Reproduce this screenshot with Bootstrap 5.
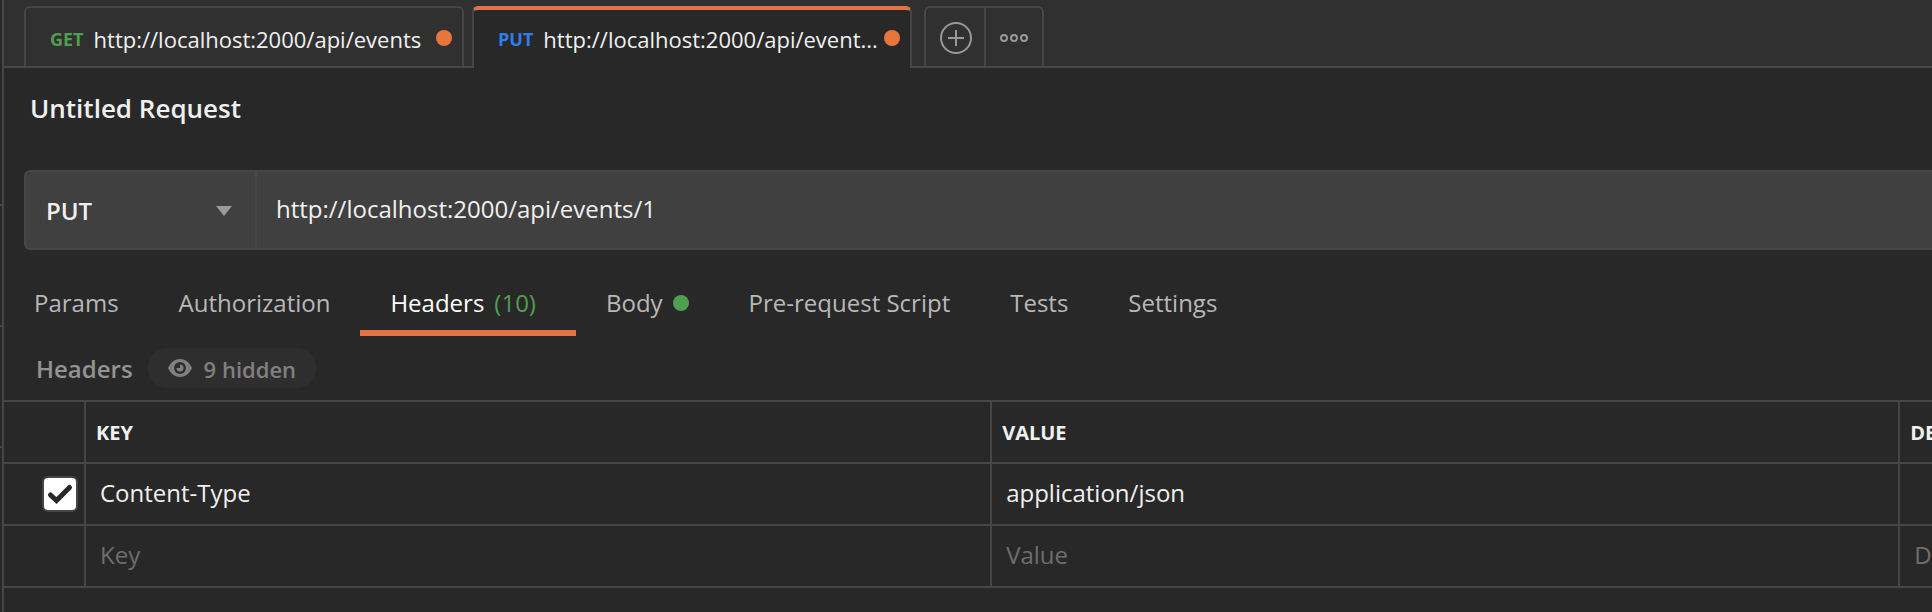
<!DOCTYPE html>
<html lang="en" data-bs-theme="dark">
<head>
<meta charset="utf-8">
<meta name="viewport" content="width=device-width, initial-scale=1">
<title>Untitled Request</title>
<link href="https://cdn.jsdelivr.net/npm/bootstrap@5.3.0/dist/css/bootstrap.min.css" rel="stylesheet">
<style>
:root { --edge: #464646; --pane: #282828; --bar: #303030; --field: #404040; --accent: #e8763a; --line: #e27347; --green: #4f9e52; --ink: #f0f0f0; }
body { font-family: "Open Sans", sans-serif; font-size: 24px; line-height: 32px; background: var(--pane); color: var(--ink); overflow: hidden; }
.side-rail { width: 4px; border-right: 2px solid var(--edge); }
.side-rail i { display: block; height: 121px; border-bottom: 2px solid var(--edge); }
.side-rail i:first-child { height: 206px; }
.tab-strip { height: 68px; padding: 6px 0 0 20px; background: linear-gradient(var(--edge), var(--edge)) bottom / 100% 2px no-repeat var(--bar); }
.req-tab { width: 440px; border: 2px solid var(--edge); border-bottom: 0; border-radius: 6px 6px 0 0; color: var(--ink); font-size: 22px; padding: 2px 10px 0 24px; text-decoration: none; margin-right: 8px; height: 60px; }
.req-tab:hover { color: var(--ink); }
.req-tab.active { height: 62px; background: var(--pane); border-top: 4px solid var(--line); margin-right: 12px; padding: 0 10px 2px 24px; }
.verb { font-size: 18px; font-weight: 700; margin-right: 10px; }
.verb-get { color: var(--green); }
.verb-put { color: #2f7de9; }
.req-tab span:not(.dot) { padding-top: 2px; }
.dot { width: 16px; height: 16px; border-radius: 50%; background: var(--accent); flex: none; }
.dot-green { background: var(--green); margin-left: 10px; }
.strip-tools { height: 60px; border: 2px solid var(--edge); border-bottom: 0; border-radius: 6px 6px 0 0; }
.strip-tools button { display: flex; align-items: center; justify-content: center; width: 56px; padding: 2px 0 0; border: 0; background: none; }
.strip-tools button:first-child { width: 60px; padding-left: 2px; border-right: 2px solid var(--edge); }
.req-title { font-size: 26px; line-height: 36px; font-weight: 600; margin: 0; padding: 22px 26px 44px; color: var(--ink); }
.url-bar { height: 80px; margin-left: 20px; background: var(--field); border: 2px solid var(--edge); border-right: 0; border-radius: 6px 0 0 6px; }
.method-select { width: 231px; border: 0; border-right: 2px solid var(--edge); appearance: none; background: transparent; color: var(--ink); font-weight: 600; padding: 2px 20px 0; }
.caret { position: absolute; right: 25px; top: 34px; pointer-events: none; }
.url-input { border: 0; background: transparent; color: var(--ink); padding: 0 19px 2px; }
.section-tabs { padding-top: 34px; }
.section-tabs a { display: flex; align-items: center; padding: 2px 30px 10px; height: 52px; border-bottom: 6px solid transparent; color: #b8b8b8; text-decoration: none; }
.section-tabs a.active { color: #fff; border-color: var(--line); }
.count { color: var(--green); margin: 0 10px; }
.sub-head { padding: 12px 32px; font-weight: 600; color: #939393; gap: 15px; }
.sub-head h2 { font-size: 24px; line-height: 32px; font-weight: 600; margin: 0; padding-top: 2px; color: #939393; }
.hidden-pill { height: 40px; border: 0; border-radius: 20px; background: #2e2e2e; color: #808080; font-size: 22px; font-weight: 600; padding: 0 20px; }
.hidden-pill span { padding-top: 2px; }
.kv-grid { table-layout: fixed; width: 100%; border-collapse: separate; border-spacing: 0; border-top: 2px solid var(--edge); }
.kv-grid th, .kv-grid td { height: 62px; padding: 0 0 2px 14px; border-bottom: 2px solid var(--edge); border-right: 2px solid var(--edge); overflow: hidden; white-space: nowrap; }
.kv-grid th { font-size: 20px; font-weight: 700; padding: 2px 0 0 10px; }
.kv-grid tr > :last-child { border-right: 0; }
.kv-grid input[type=text] { display: block; width: 100%; border: 0; padding: 0; background: none; color: var(--ink); }
.kv-grid ::placeholder { color: #6e6e6e; opacity: 1; }
.pick { width: 82px; }
.key-col { width: 47%; }
.value-col { width: 47.1%; }
.kv-grid .form-check-input { display: block; width: 36px; height: 36px; margin: 0 6px 0 auto; border: 2px solid var(--edge); border-radius: 6px; background: #fff url("data:image/svg+xml,%3Csvg xmlns='http://www.w3.org/2000/svg' viewBox='0 0 32 32'%3E%3Cpath d='M6.500 17l6 5.500L25.500 9.500' fill='none' stroke='%23282828' stroke-width='5' stroke-linecap='round' stroke-linejoin='miter'/%3E%3C/svg%3E") center / 32px 32px no-repeat; }
.kv-grid td.pick-cell { padding: 0; }
</style>
</head>
<body>
<div class="d-flex min-vh-100">
  <div class="side-rail flex-shrink-0" aria-hidden="true"><i></i><i></i><i></i></div>
  <main class="flex-grow-1 overflow-hidden">
    <nav class="tab-strip d-flex align-items-start" aria-label="Open requests">
      <a href="#" class="req-tab d-flex align-items-center"><span class="verb verb-get">GET</span><span class="text-truncate">http://localhost:2000/api/events</span><span class="dot ms-auto"></span></a>
      <a href="#" class="req-tab active d-flex align-items-center" aria-current="page"><span class="verb verb-put">PUT</span><span class="text-nowrap">http://localhost:2000/api/event...</span><span class="dot ms-auto"></span></a>
      <div class="strip-tools d-flex">
        <button type="button" aria-label="New tab"><svg width="34" height="34" viewBox="0 0 34 34" fill="none" stroke="#999" stroke-width="2"><circle cx="17" cy="17" r="15"/><path d="M17 9v16M9 17h16"/></svg></button>
        <button type="button" aria-label="Tab options"><svg width="30" height="12" viewBox="0 0 30 12" fill="none" stroke="#999" stroke-width="2"><circle cx="5" cy="6" r="3"/><circle cx="15" cy="6" r="3"/><circle cx="25" cy="6" r="3"/></svg></button>
      </div>
    </nav>
    <h1 class="req-title">Untitled Request</h1>
    <div class="url-bar d-flex">
      <div class="position-relative d-flex">
        <select class="method-select" aria-label="Method"><option>PUT</option><option>GET</option></select>
        <svg class="caret" width="16" height="10" viewBox="0 0 16 10"><path d="M0 0h16L8 10z" fill="#999"/></svg>
      </div>
      <input class="url-input flex-grow-1" type="text" aria-label="Request URL" value="http://localhost:2000/api/events/1">
    </div>
    <nav class="section-tabs d-flex" aria-label="Request sections">
      <a href="#">Params</a>
      <a href="#">Authorization</a>
      <a href="#" class="active">Headers<span class="count">(10)</span></a>
      <a href="#">Body<span class="dot dot-green"></span></a>
      <a href="#">Pre-request Script</a>
      <a href="#">Tests</a>
      <a href="#">Settings</a>
    </nav>
    <div class="sub-head d-flex align-items-center">
      <h2>Headers</h2>
      <button type="button" class="hidden-pill d-flex align-items-center"><svg class="me-2" width="24" height="18" viewBox="0 0 24 18"><path d="M0 9C3 3 7 0 12 0s9 3 12 9c-3 6-7 9-12 9S3 15 0 9z" fill="#808080"/><circle cx="12" cy="9" r="6" fill="#2e2e2e"/><path d="M12 9V5.500A3.500 3.500 0 1 1 8.500 9z" fill="#808080"/></svg><span class="ps-1">9 hidden</span></button>
    </div>
    <table class="kv-grid">
      <colgroup><col class="pick"><col class="key-col"><col class="value-col"><col></colgroup>
      <thead><tr><th></th><th scope="col">KEY</th><th scope="col">VALUE</th><th scope="col">DESCRIPTION</th></tr></thead>
      <tbody>
        <tr><td class="pick-cell"><input class="form-check-input" type="checkbox" checked aria-label="Include Content-Type"></td><td>Content-Type</td><td>application/json</td><td></td></tr>
        <tr><td></td><td><input type="text" placeholder="Key" aria-label="Key"></td><td><input type="text" placeholder="Value" aria-label="Value"></td><td><input type="text" placeholder="Description" aria-label="Description"></td></tr>
      </tbody>
    </table>
  </main>
</div>
<script src="https://cdn.jsdelivr.net/npm/bootstrap@5.3.0/dist/js/bootstrap.bundle.min.js"></script>
</body>
</html>
